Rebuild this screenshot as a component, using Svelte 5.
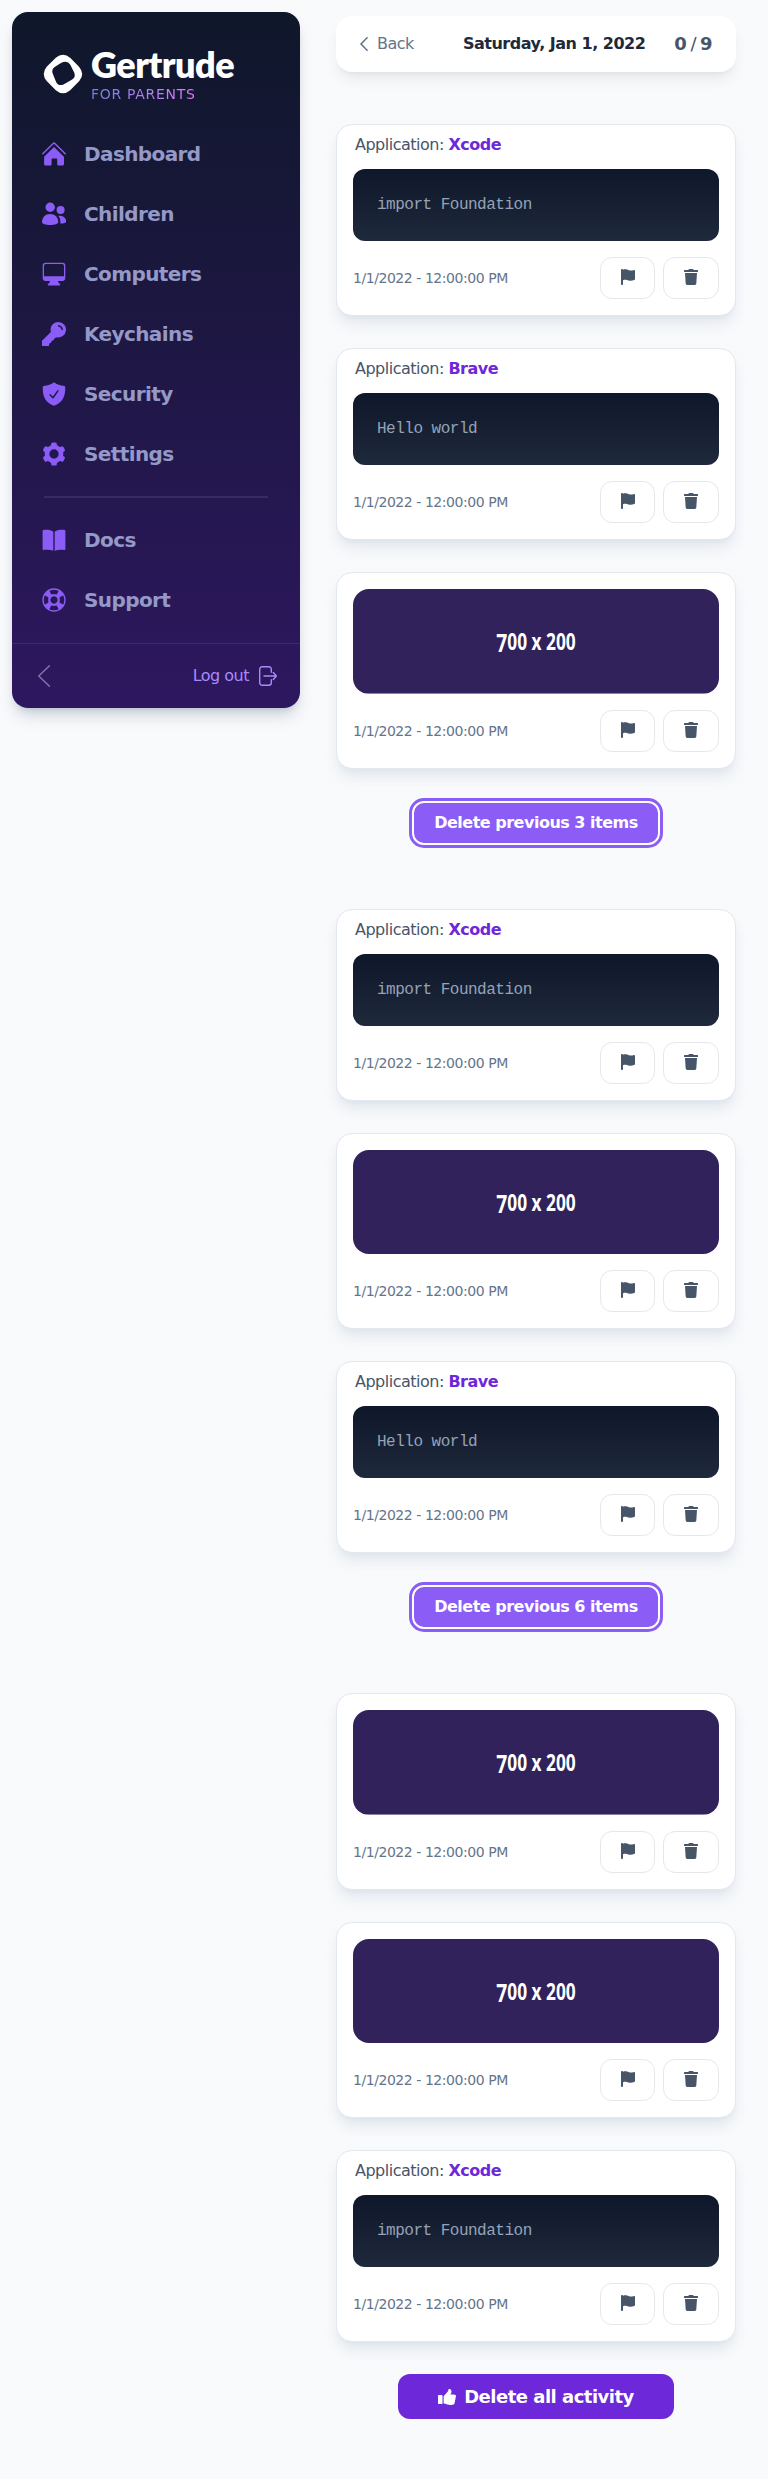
<script>
  const nav = [
    { label: 'Dashboard', icon: 'home' },
    { label: 'Children', icon: 'people' },
    { label: 'Computers', icon: 'desktop' },
    { label: 'Keychains', icon: 'key' },
    { label: 'Security', icon: 'shield' },
    { label: 'Settings', icon: 'gear' }
  ];
  const help = [
    { label: 'Docs', icon: 'book' },
    { label: 'Support', icon: 'ring' }
  ];
  const xcode = { app: 'Xcode', text: 'import Foundation' };
  const brave = { app: 'Brave', text: 'Hello world' };
  const shot = {};
  const groups = [
    { items: [xcode, brave, shot], count: 3 },
    { items: [xcode, shot, brave], count: 6 },
    { items: [shot, shot, xcode], count: 0 }
  ];
  const teeth = [0, 60, 120, 180, 240, 300];
  const spokes = [45, 135, 225, 315];
</script>

{#snippet navItem(item)}
  <a class="nav-item" href="#top">
    <svg viewBox="0 0 24 24" width="24" height="24" fill="currentColor">
      {#if item.icon === 'home'}
        <path d="M.8 11.8 11.2 1.5a1.15 1.15 0 0 1 1.6 0L23.2 11.8" fill="none" stroke="currentColor" stroke-width="1.5" stroke-linecap="round" />
        <path d="M12 4.900 22 14.700V22a1.600 1.600 0 0 1-1.600 1.600h-3.900a1.300 1.300 0 0 1-1.300-1.300v-5.100a.8.8 0 0 0-.8-.8h-4a.8.8 0 0 0-.8.8v5.100a1.300 1.300 0 0 1-1.300 1.300H3.700A1.600 1.600 0 0 1 2.100 22v-7.300z" />
      {:else if item.icon === 'people'}
        <circle cx="8.200" cy="5.200" r="4.700" />
        <circle cx="18.600" cy="7.900" r="4" />
        <path d="M0 20.200C0 15.500 3.500 12 8.100 12s8.200 3.500 8.200 8.200c0 1.500-3.500 2.800-8.200 2.800S0 21.700 0 20.200z" />
        <path d="M16.300 13.800c4.500-.9 8 2 8 5.700 0 1.200-2.400 2-6 2 .2-3-.2-5.500-2-7.700z" />
      {:else if item.icon === 'desktop'}
        <path fill-rule="evenodd" d="M3.500.7h17A2.800 2.800 0 0 1 23.300 3.500v12.600a2.800 2.800 0 0 1-2.800 2.800H3.500a2.800 2.800 0 0 1-2.800-2.800V3.500A2.800 2.800 0 0 1 3.500.7zM3.900 2A1.900 1.900 0 0 0 2 3.900v10.400h20V3.900A1.900 1.900 0 0 0 20.100 2z" />
        <path d="M8 18.500h8c0 1.800.6 2.500 1.800 3.300.9.6.5 1.700-.5 1.700H6.700c-1 0-1.400-1.100-.5-1.700C7.400 21 8 20.300 8 18.500z" />
      {:else if item.icon === 'key'}
        <path fill-rule="evenodd" d="M16.300 0A7.700 7.700 0 1 1 14.600 15.200l-2 1-.9 2-1.900.6-.8 1.900-1.700.7-.4 2.500H.8A.8.8 0 0 1 0 23.200v-4.400L8.900 9.900A7.700 7.700 0 0 1 16.300 0zM16 3v1.400c2.100.2 3.400 1.500 3.600 3.600H21C20.900 5.100 18.900 3.100 16 3z" />
      {:else if item.icon === 'shield'}
        <path d="M12 .3c2.800 2.300 6.300 3.300 10.200 3.600.7 0 1 .5 1 1.100.4 9.300-2.500 15.300-10.500 18.600q-.7.3-1.400 0C3.300 20.300.4 14.300.8 5c0-.6.4-1 1-1.100C5.700 3.600 9.200 2.600 12 .3z" />
        <path d="m8.200 12.900 2.800 2.900 4.900-6.900" fill="none" stroke="#21184a" stroke-width="1.500" stroke-linecap="round" stroke-linejoin="round" />
      {:else if item.icon === 'gear'}
        <circle cx="12" cy="12" r="7" fill="none" stroke="currentColor" stroke-width="4.700" />
        {#each teeth as a}
          <rect x="9.100" y=".4" width="5.800" height="6" rx="1.600" transform={`rotate(${a} 12 12)`} />
        {/each}
      {:else if item.icon === 'book'}
        <path d="M11.300 3.700C8.500 1.700 4.700 1.600 1.300 2.100a.8.8 0 0 0-.7.8v18.300c0 .5.4.8.9.8 3.200-.6 6.700-.4 9.800.7zM12.700 3.700c2.800-2 6.600-2.100 10-1.600.4.1.7.4.7.8v18.300c0 .5-.4.8-.9.8-3.200-.6-6.700-.4-9.800.7z" />
      {:else}
        <circle cx="12" cy="12" r="11" fill="none" stroke="currentColor" stroke-width="1.300" />
        {#each spokes as a}
          <path d="M8.400 1.400h7.200l-1.300 3.600-.3 5h-4l-.3-5z" transform={`rotate(${a} 12 12)`} />
        {/each}
        <circle cx="12" cy="12" r="4.800" fill="none" stroke="currentColor" stroke-width="2.200" />
        <circle cx="12" cy="12" r="3.400" fill="#271853" />
      {/if}
    </svg>
    <span>{item.label}</span>
  </a>
{/snippet}

<div class="page">
  <aside>
    <div class="brand">
      <svg viewBox="0 0 40 40" width="40" height="40">
        <path fill="#fff" fill-rule="evenodd" d="M12.800 3.700Q20.100-2.100 27.400 4L36 12.700Q42.300 20 36.300 27L27.200 36.200Q20 42.300 12.800 36.200L3.700 27Q-2.200 20 3.700 12.800ZM17.500 9.200 11.300 13.300Q8.400 15.500 9.600 19.200L13 27.700Q15 32.500 20.500 30.500L28.300 26Q33 23.500 31.300 18.800L27.300 10.800Q24.500 5.800 17.500 9.200Z" />
      </svg>
      <div class="brand-text">
        <div class="name">Gertrude</div>
        <div class="sub">FOR PARENTS</div>
      </div>
    </div>
    <nav>
      {#each nav as item}{@render navItem(item)}{/each}
      <div class="rule"></div>
      {#each help as item}{@render navItem(item)}{/each}
    </nav>
    <div class="foot">
      <svg viewBox="0 0 12 22" width="12" height="22" fill="none" stroke="#8375ab" stroke-width="1.400" stroke-linecap="round" stroke-linejoin="round"><path d="M11.400.7.8 11l10.600 10.300" /></svg>
      <a class="logout" href="#top">
        <span>Log out</span>
        <svg viewBox="0 0 18 20" width="18" height="20" fill="none" stroke="currentColor" stroke-width="1.400" stroke-linecap="round" stroke-linejoin="round"><path d="M12.300 6.200V3.200A2.500 2.500 0 0 0 9.800.7H3.200A2.500 2.500 0 0 0 .7 3.200v13.600a2.500 2.500 0 0 0 2.500 2.500h6.600a2.500 2.500 0 0 0 2.500-2.500v-3M5 10h12.200M14.300 6.500 17.400 10l-3.100 3.500" /></svg>
      </a>
    </div>
  </aside>

  <main>
    <header>
      <a class="back" href="#top">
        <svg viewBox="0 0 8 14" width="8" height="14" fill="none" stroke="currentColor" stroke-width="1.600" stroke-linecap="round" stroke-linejoin="round"><path d="M7.100.8 1 7l6.100 6.200" /></svg>
        <span>Back</span>
      </a>
      <h1>Saturday, Jan 1, 2022</h1>
      <div class="count"><b>0</b><span>/</span><b>9</b></div>
    </header>

    {#each groups as group}
      <section>
        {#each group.items as item}
          <article>
            {#if item.app}
              <p class="app">Application: <b>{item.app}</b></p>
              <pre>{item.text}</pre>
            {:else}
              <svg class="shot" viewBox="0 0 700 200">
                <rect width="700" height="200" fill="#31225c" />
                <text x="274" y="121" fill="#fff" font-family="'Open Sans', sans-serif" font-weight="700" font-size="44" letter-spacing="0" textLength="152" lengthAdjust="spacingAndGlyphs"><tspan font-size="49">7</tspan><tspan dy="-5">00 x 200</tspan></text>
              </svg>
            {/if}
            <div class="actions">
              <time>1/1/2022 - 12:00:00 PM</time>
              <button class="flag" aria-label="Flag">
                <svg viewBox="0 0 14 16" width="14" height="16" fill="currentColor"><path d="M0 .8A.8.8 0 0 1 .8 0h.4a.8.8 0 0 1 .8.7C4.800-.1 5.700.6 8 1.300c1.800.5 3.300.2 4.900-.3.6-.2 1.100.2 1.100.8v8.200c0 .5-.2.8-.7 1-3.700 1.500-5.500.5-7.600-.1-1.300-.3-2.400-.1-3.700.3V15.200a.8.8 0 0 1-.8.8H.8a.8.8 0 0 1-.8-.8z" /></svg>
              </button>
              <button class="trash" aria-label="Delete">
                <svg viewBox="0 0 14 16" width="14" height="16" fill="currentColor"><path d="M4.200 1 4.600.4A.8.8 0 0 1 5.300 0h3.400a.8.8 0 0 1 .7.4l.4.6h3.600a.6.6 0 0 1 .6.6v.8a.6.6 0 0 1-.6.6H.6a.6.6 0 0 1-.6-.6v-.8A.6.6 0 0 1 .6 1zM1 4h12l-.7 10.600A1.500 1.500 0 0 1 10.800 16H3.200a1.500 1.500 0 0 1-1.500-1.400z" /></svg>
              </button>
            </div>
          </article>
        {/each}
        {#if group.count}
          <button class="partial">Delete previous {group.count} items</button>
        {/if}
      </section>
    {/each}

    <button class="all">
      <svg viewBox="0 0 512 448" width="18" height="16" fill="#fff"><path d="M104 160H24a24 24 0 0 0-24 24v240a24 24 0 0 0 24 24h80a24 24 0 0 0 24-24V184a24 24 0 0 0-24-24zM384 49.400C384 91.900 358 115.700 350.700 144h101.700c33.400 0 59.400 27.700 59.600 58.100.1 17.900-7.500 37.200-19.400 49.200 9.800 23.300 8.200 56-9.300 79.500 8.700 25.900-.1 57.700-16.400 74.800 4.300 17.600 2.200 32.600-6.100 44.600-20.300 29-70.600 29.800-113.100 29.800-56-.1-101.900-20.500-138.700-36.900-18.600-8.300-42.800-18.500-61.200-18.800A12 12 0 0 1 160 412V198.400a12 12 0 0 1 3.600-8.500c45.400-44.900 65-92.500 102.200-129.800 17-17 23.200-42.700 29.100-67.500C300-28.600 310.600-32 320-32c16 0 64 13 64 81.400z" transform="translate(0 28) scale(1 .88)" /></svg>
      <span>Delete all activity</span>
    </button>
  </main>
</div>

<style>
  :global(body) {
    margin: 0;
    background: #f9fafc;
  }
  .page {
    display: flex;
    align-items: flex-start;
    gap: 36px;
    box-sizing: border-box;
    width: 768px;
    height: 2479px;
    padding: 12px;
    font-family: 'DejaVu Sans', sans-serif;
    font-size: 16px;
    line-height: 24px;
    letter-spacing: -0.5px;
  }
  svg { display: block; flex: none; }
  a { color: inherit; text-decoration: none; }
  button { font: inherit; letter-spacing: inherit; padding: 0; }

  aside {
    display: flex;
    flex-direction: column;
    flex: none;
    width: 288px;
    height: 696px;
    border-radius: 16px;
    background: linear-gradient(to bottom, #0f172a, #2e1760);
    box-shadow: 0 10px 15px -3px rgba(100, 116, 139, 0.3), 0 4px 6px -4px rgba(100, 116, 139, 0.3);
  }
  .brand {
    display: flex;
    gap: 8px;
    padding: 32px 0 0 31px;
    height: 80px;
  }
  .brand svg { margin-top: 10px; }
  .name {
    font: 800 36px/40px Lato, sans-serif;
    letter-spacing: -0.5px;
    color: #fff;
  }
  .sub {
    width: max-content;
    font-size: 14px;
    line-height: 20px;
    letter-spacing: 0.05em;
    color: transparent;
    background: linear-gradient(to right, #6f7fe0, #a881f0 45%, #e879f9);
    background-clip: text;
    -webkit-background-clip: text;
  }
  nav { display: flex; flex-direction: column; height: 519px; }
  .nav-item {
    display: flex;
    align-items: center;
    gap: 18px;
    height: 60px;
    padding-left: 30px;
    color: #8b5cf6;
  }
  .nav-item span {
    font-size: 20px;
    font-weight: 700;
    letter-spacing: -0.6px;
    color: #9499c7;
  }
  .rule {
    height: 2px;
    margin: 12px 32px;
    background: #342b60;
  }
  .foot {
    display: flex;
    align-items: center;
    justify-content: space-between;
    flex: 1;
    padding: 0 23px 0 26px;
    border-top: 1px solid #3d2c69;
  }
  .logout {
    display: flex;
    align-items: center;
    gap: 10px;
    color: #a78bfa;
  }

  main { width: 400px; padding-top: 4px; }
  header {
    display: flex;
    align-items: center;
    box-sizing: border-box;
    height: 56px;
    margin-bottom: 52px;
    padding: 0 24px;
    border-radius: 16px;
    background: #fff;
    box-shadow: 0 10px 15px -3px rgba(0, 0, 0, 0.07), 0 4px 6px -4px rgba(0, 0, 0, 0.08);
  }
  .back { display: flex; align-items: center; gap: 9px; width: 103px; color: #64748b; }
  h1 { flex: 1; margin: 0; font-size: 16px; font-weight: 700; color: #1e293b; white-space: nowrap; }
  .count { display: flex; gap: 4px; font-size: 18px; color: #475569; }

  section { display: flex; flex-direction: column; gap: 32px; }
  article {
    box-sizing: border-box;
    padding: 16px;
    border: 1px solid #e2e8f0;
    border-radius: 16px;
    background: #fff;
    box-shadow: 0 10px 15px -3px rgba(203, 213, 225, 0.5), 0 4px 6px -4px rgba(203, 213, 225, 0.5);
  }
  .app { margin: -8px 0 12px 2px; color: #475569; }
  .app b { color: #6d28d9; }
  pre {
    box-sizing: border-box;
    height: 72px;
    margin: 0;
    padding: 24px;
    border-radius: 12px;
    background: linear-gradient(to bottom, #0f172a, #1e293b);
    color: #94a3b8;
    font-family: 'Liberation Mono', monospace;
    font-size: 16px;
    line-height: 24px;
  }
  .shot { width: 366px; height: 104.57px; border-radius: 16px; }
  .actions {
    display: flex;
    align-items: center;
    gap: 8px;
    margin-top: 16px;
  }
  time { flex: 1; font-size: 14px; line-height: 20px; letter-spacing: -0.45px; color: #64748b; }
  .actions button {
    display: flex;
    align-items: center;
    justify-content: center;
    box-sizing: border-box;
    width: 55px;
    height: 42px;
    padding-bottom: 2px;
    border: 1px solid #e5e7eb;
    border-radius: 12px;
    background: #fff;
    color: #475569;
  }
  .actions .trash { width: 56px; }
  .partial {
    align-self: center;
    box-sizing: border-box;
    width: 248px;
    height: 44px;
    margin-bottom: 64px;
    border: 2px solid #fff;
    border-radius: 12px;
    background: #8b5cf6;
    box-shadow: 0 0 0 3px #8b5cf6;
    color: #fff;
    font-weight: 700;
  }
  .all {
    display: flex;
    align-items: center;
    justify-content: center;
    gap: 8px;
    width: 276px;
    height: 45px;
    margin: 32px auto 0;
    border: 0;
    border-radius: 12px;
    background: #6d28d9;
    color: #fff;
    font-size: 18px;
    font-weight: 700;
  }
</style>
